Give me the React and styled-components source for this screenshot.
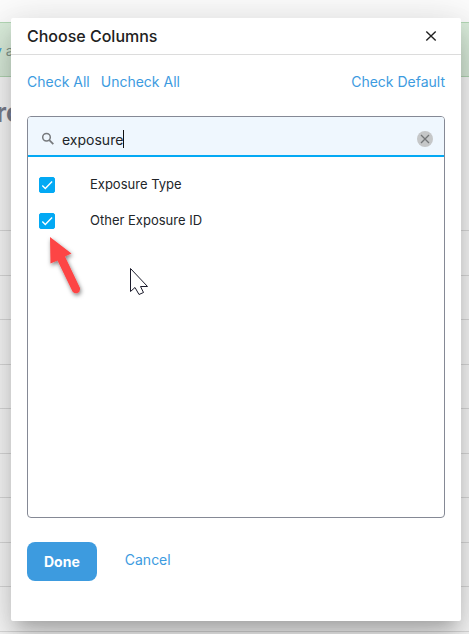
import React, { useState } from "react";
import styled, { createGlobalStyle } from "styled-components";

const GlobalStyle = createGlobalStyle`
  *, *::before, *::after { box-sizing: border-box; }
  body {
    margin: 0;
    background: #fdfdfd;
    color: #212529;
    font-family: Inter, "Liberation Sans", sans-serif;
    overflow: hidden;
  }
  button, input { font: inherit; }
`;

const Stage = styled.div`
  display: grid;
  grid-template-columns: minmax(0, 1fr);
  height: 100vh;
  overflow: hidden;

  > * { grid-area: 1 / 1; }
`;

const Page = styled.div`
  padding-top: 22px;
  overflow: hidden;
`;

const Banner = styled.div`
  height: 55px;
  padding-top: 18px;
  border: solid #b5d9b7;
  border-width: 1px 0;
  background: #dcefdd;
  color: #84988d;
  font-size: 14px;
  line-height: 20px;
  white-space: nowrap;
  text-indent: -6px;
`;

const BannerLink = styled.a`
  color: #3c9adf;
  text-decoration: none;
`;

const PageTitle = styled.h1`
  margin: 20px 0 0;
  color: #7c8290;
  font-size: 26px;
  font-weight: 700;
  line-height: 32px;
  text-indent: -4px;
`;

const PageRow = styled.div`
  height: ${(p) => (p.$first ? 102 : p.$tall ? 45 : 44)}px;
  border-bottom: 1px solid #dedede;
`;

const Dialog = styled.section`
  position: relative;
  align-self: start;
  margin: 18px 8px 0 11px;
  background: #fff;
  border-radius: 2px;
  box-shadow:
    0 11px 15px -7px rgba(0, 0, 0, 0.2),
    0 24px 38px 3px rgba(0, 0, 0, 0.14),
    0 9px 46px 8px rgba(0, 0, 0, 0.12);
`;

const Header = styled.header`
  display: flex;
  align-items: center;
  justify-content: space-between;
  height: 37px;
  padding: 0 20px 0 16px;
  border-bottom: 1px solid #dcdcdc;
`;

const Title = styled.h2`
  margin: 0;
  color: #212121;
  font-size: 16px;
  font-weight: 500;
  line-height: 24px;
`;

const IconButton = styled.button`
  display: grid;
  place-items: center;
  width: 20px;
  height: 20px;
  padding: 0;
  border: 0;
  background: none;
  cursor: pointer;
`;

const Body = styled.div`
  padding: 17px 16px 40px;
`;

const Toolbar = styled.div`
  display: flex;
  gap: 11px;
  margin-bottom: 24px;
`;

const TextButton = styled.button`
  margin-left: ${(p) => (p.$end ? "auto" : 0)};
  padding: 0;
  border: 0;
  background: none;
  color: #3d9bdf;
  font-size: 14px;
  line-height: 20px;
  cursor: pointer;
`;

const ListBox = styled.div`
  min-height: 402px;
  border: 1px solid #858995;
  border-radius: 4px;
  overflow: hidden;
`;

const Search = styled.div`
  display: flex;
  align-items: center;
  height: 40px;
  padding: 5px 9px 0 12px;
  border-bottom: 2px solid #03a9f4;
  background: #eff7fe;
`;

const SearchField = styled.div`
  position: relative;
  flex: 1;
  min-width: 0;
  margin-left: 6px;
  padding-top: 2px;
`;

const SearchInput = styled.input`
  display: block;
  width: 100%;
  padding: 0;
  border: 0;
  outline: 0;
  background: none;
  color: #212529;
  caret-color: transparent;
  font-size: 14px;
  line-height: 20px;
`;

const Caret = styled.span`
  position: absolute;
  top: 2px;
  left: 0;
  border-right: 1px solid #111;
  color: transparent;
  font-size: 14px;
  line-height: 18px;
  pointer-events: none;
`;

const Options = styled.div`
  display: grid;
  gap: 16px;
  padding: 17px 11px;
`;

const OptionLabel = styled.label`
  display: flex;
  align-items: center;
  gap: 35px;
  height: 20px;
  color: #212529;
  font-size: 13px;
  line-height: 20px;
  cursor: pointer;
`;

const CheckWrap = styled.span`
  display: grid;
  width: 16px;
  height: 16px;
  margin-top: 2px;

  > * { grid-area: 1 / 1; }
  > svg { pointer-events: none; z-index: 1; }
`;

const CheckInput = styled.input`
  appearance: none;
  width: 16px;
  height: 16px;
  margin: 0;
  border: 1px solid #858995;
  border-radius: 2px;

  &:checked {
    border-color: #03a9f4;
    background: #03a9f4;
  }
`;

const Footer = styled.footer`
  display: flex;
  align-items: center;
  gap: 28px;
  margin-top: 24px;
`;

const DoneButton = styled.button`
  height: 39px;
  padding: 0 17px;
  border: 0;
  border-radius: 8px;
  background: #3d9bdf;
  color: #fff;
  font-size: 14px;
  font-weight: 700;
  line-height: 20px;
  cursor: pointer;
`;

const CancelButton = styled(TextButton)`
  padding-bottom: 3px;
`;

const Annotations = styled.svg`
  position: absolute;
  left: 32px;
  top: 212px;
  width: 120px;
  height: 80px;
  pointer-events: none;
`;

const COLUMNS = ["Exposure Type", "Other Exposure ID"];

function CloseIcon() {
  return (
    <svg width="12" height="12" viewBox="0 0 12 12" stroke="#212121" strokeWidth="1.4" fill="none">
      <path d="M1.300 1.500l9.400 9M10.700 1.500l-9.400 9" />
    </svg>
  );
}

function SearchIcon() {
  return (
    <svg width="16" height="16" viewBox="0 0 16 16" fill="none" stroke="#777a7d">
      <circle cx="6.5" cy="6.3" r="3.8" strokeWidth="1.5" />
      <path d="M9.3 9.1l4 4" strokeWidth="1.8" />
    </svg>
  );
}

function ClearIcon() {
  return (
    <svg width="16" height="16" viewBox="0 0 16 16" fill="none">
      <circle cx="8" cy="8" r="8" fill="#c5c7c8" />
      <path d="M4 4l8 8M12 4l-8 8" stroke="#737678" strokeWidth="1.3" />
    </svg>
  );
}

function ColumnOption({ name }) {
  const [checked, setChecked] = useState(true);
  return (
    <OptionLabel>
      <CheckWrap>
        <CheckInput type="checkbox" checked={checked} onChange={(e) => setChecked(e.target.checked)} />
        {checked && (
          <svg width="16" height="16" viewBox="0 0 16 16" fill="none">
            <path d="M3.3 8.4l3 3 6.8-6.9" stroke="#fff" strokeWidth="1.4" />
          </svg>
        )}
      </CheckWrap>
      {name}
    </OptionLabel>
  );
}

export default function App() {
  const [query, setQuery] = useState("exposure");
  const shown = COLUMNS.filter((c) => c.toLowerCase().includes(query.toLowerCase()));
  return (
    <>
      <GlobalStyle />
      <Stage>
        <Page aria-hidden="true">
          <Banner>
            <BannerLink>y</BannerLink> a
          </Banner>
          <PageTitle>ro</PageTitle>
          {Array.from({ length: 10 }, (_, i) => (
            <PageRow key={i} $first={i === 0} $tall={i % 2 === 1} />
          ))}
        </Page>
        <Dialog role="dialog" aria-labelledby="dialog-title">
          <Header>
            <Title id="dialog-title">Choose Columns</Title>
            <IconButton type="button" aria-label="Close">
              <CloseIcon />
            </IconButton>
          </Header>
          <Body>
            <Toolbar>
              <TextButton type="button">Check All</TextButton>
              <TextButton type="button">Uncheck All</TextButton>
              <TextButton type="button" $end>Check Default</TextButton>
            </Toolbar>
            <ListBox>
              <Search>
                <SearchIcon />
                <SearchField>
                  <SearchInput
                    type="text"
                    aria-label="Search columns"
                    value={query}
                    onChange={(e) => setQuery(e.target.value)}
                  />
                  <Caret aria-hidden="true">{query}</Caret>
                </SearchField>
                <IconButton type="button" aria-label="Clear search" onClick={() => setQuery("")}>
                  <ClearIcon />
                </IconButton>
              </Search>
              <Options>
                {shown.map((name) => (
                  <ColumnOption key={name} name={name} />
                ))}
              </Options>
            </ListBox>
            <Footer>
              <DoneButton type="button">Done</DoneButton>
              <CancelButton type="button">Cancel</CancelButton>
            </Footer>
          </Body>
          <Annotations viewBox="0 0 120 80" aria-hidden="true">
            <defs>
              <filter id="arrow-shadow" x="-30%" y="-30%" width="170%" height="170%">
                <feDropShadow dx="1" dy="2" stdDeviation="2" floodOpacity="0.5" />
              </filter>
            </defs>
            <path
              d="M7 7L28.500 23.500L22 26.500L37 58Q37.500 62 34.500 63Q31 64 29.500 61.500L14.500 30.500L7.500 33.500Z"
              fill="#fd4444"
              filter="url(#arrow-shadow)"
            />
            <path
              d="M87.500 38.500V61.500L92 57.500L96 64.500L100.500 62.500L97.500 56.500H104.500Z"
              fill="#fff"
              stroke="#1b1b2b"
              strokeWidth="1"
            />
          </Annotations>
        </Dialog>
      </Stage>
    </>
  );
}
